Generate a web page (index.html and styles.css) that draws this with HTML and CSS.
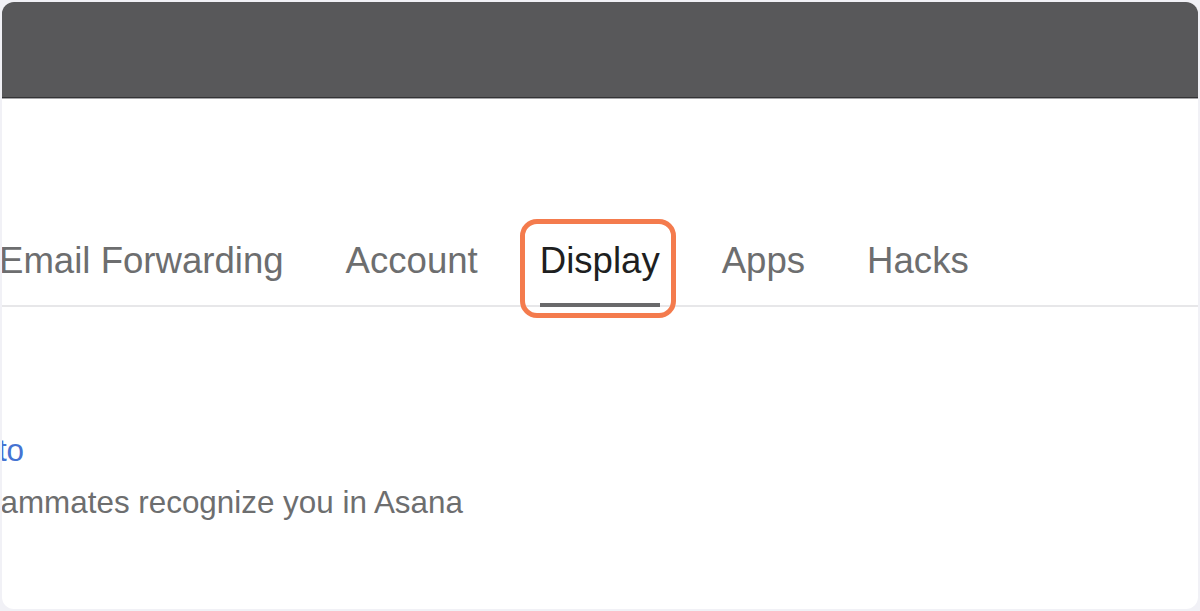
FILE: index.html
```html
<!DOCTYPE html>
<html lang="en">
<head>
  <meta charset="UTF-8">
  <title>Profile settings - Display</title>
  <link rel="stylesheet" href="styles.css">
</head>
<body>
  <div class="card">
    <div class="card-header"></div>

    <div class="tabs">
      <div class="tab">Email Forwarding</div>
      <div class="tab">Account</div>
      <div class="tab active">Display<span class="highlight"></span></div>
      <div class="tab">Apps</div>
      <div class="tab">Hacks</div>
    </div>

    <div class="photo">
      <a class="photo-link" href="#">Upload new photo</a>
      <div class="photo-hint">Photos help your teammates recognize you in Asana</div>
    </div>
  </div>
</body>
</html>
```

FILE: styles.css
```css
body {
  margin: 0;
  background: #f1f1f6;
  font-family: "Liberation Sans", Arial, sans-serif;
}

.card {
  margin: 2px;
  height: 607px;
  background: white;
  border-radius: 12px;
  overflow: hidden;
}

.card-header {
  height: 95px;
  background: #58585a;
  border-bottom: 1px solid #333335;
  box-shadow: 0 1px 0 #a5a5a8;
}

.tabs {
  display: flex;
  gap: 62px;
  margin-top: 141px;
  margin-left: -3px;
  border-bottom: 2px solid #e7e7e9;
}

.tab {
  position: relative;
  font-size: 36.6px;
  line-height: 44px;
  color: #6d6e6f;
  padding-bottom: 20px;
  border-bottom: 4px solid transparent;
  margin-bottom: -2px;
  white-space: nowrap;
}

.tab.active {
  color: #1e1f21;
  border-bottom-color: #69696b;
}

.highlight {
  position: absolute;
  top: -20px;
  bottom: -15px;
  left: -20px;
  right: -16px;
  border: 5px solid #f47b4d;
  border-radius: 17px;
}

.photo {
  margin-top: 124px;
  margin-left: -272px;
  font-size: 31.4px;
  line-height: 40px;
  white-space: nowrap;
}

.photo-link {
  display: inline-block;
  margin-left: 41px;
  color: #4573d2;
  text-decoration: none;
}

.photo-hint {
  margin-top: 12px;
  color: #6d6e6f;
}
```
